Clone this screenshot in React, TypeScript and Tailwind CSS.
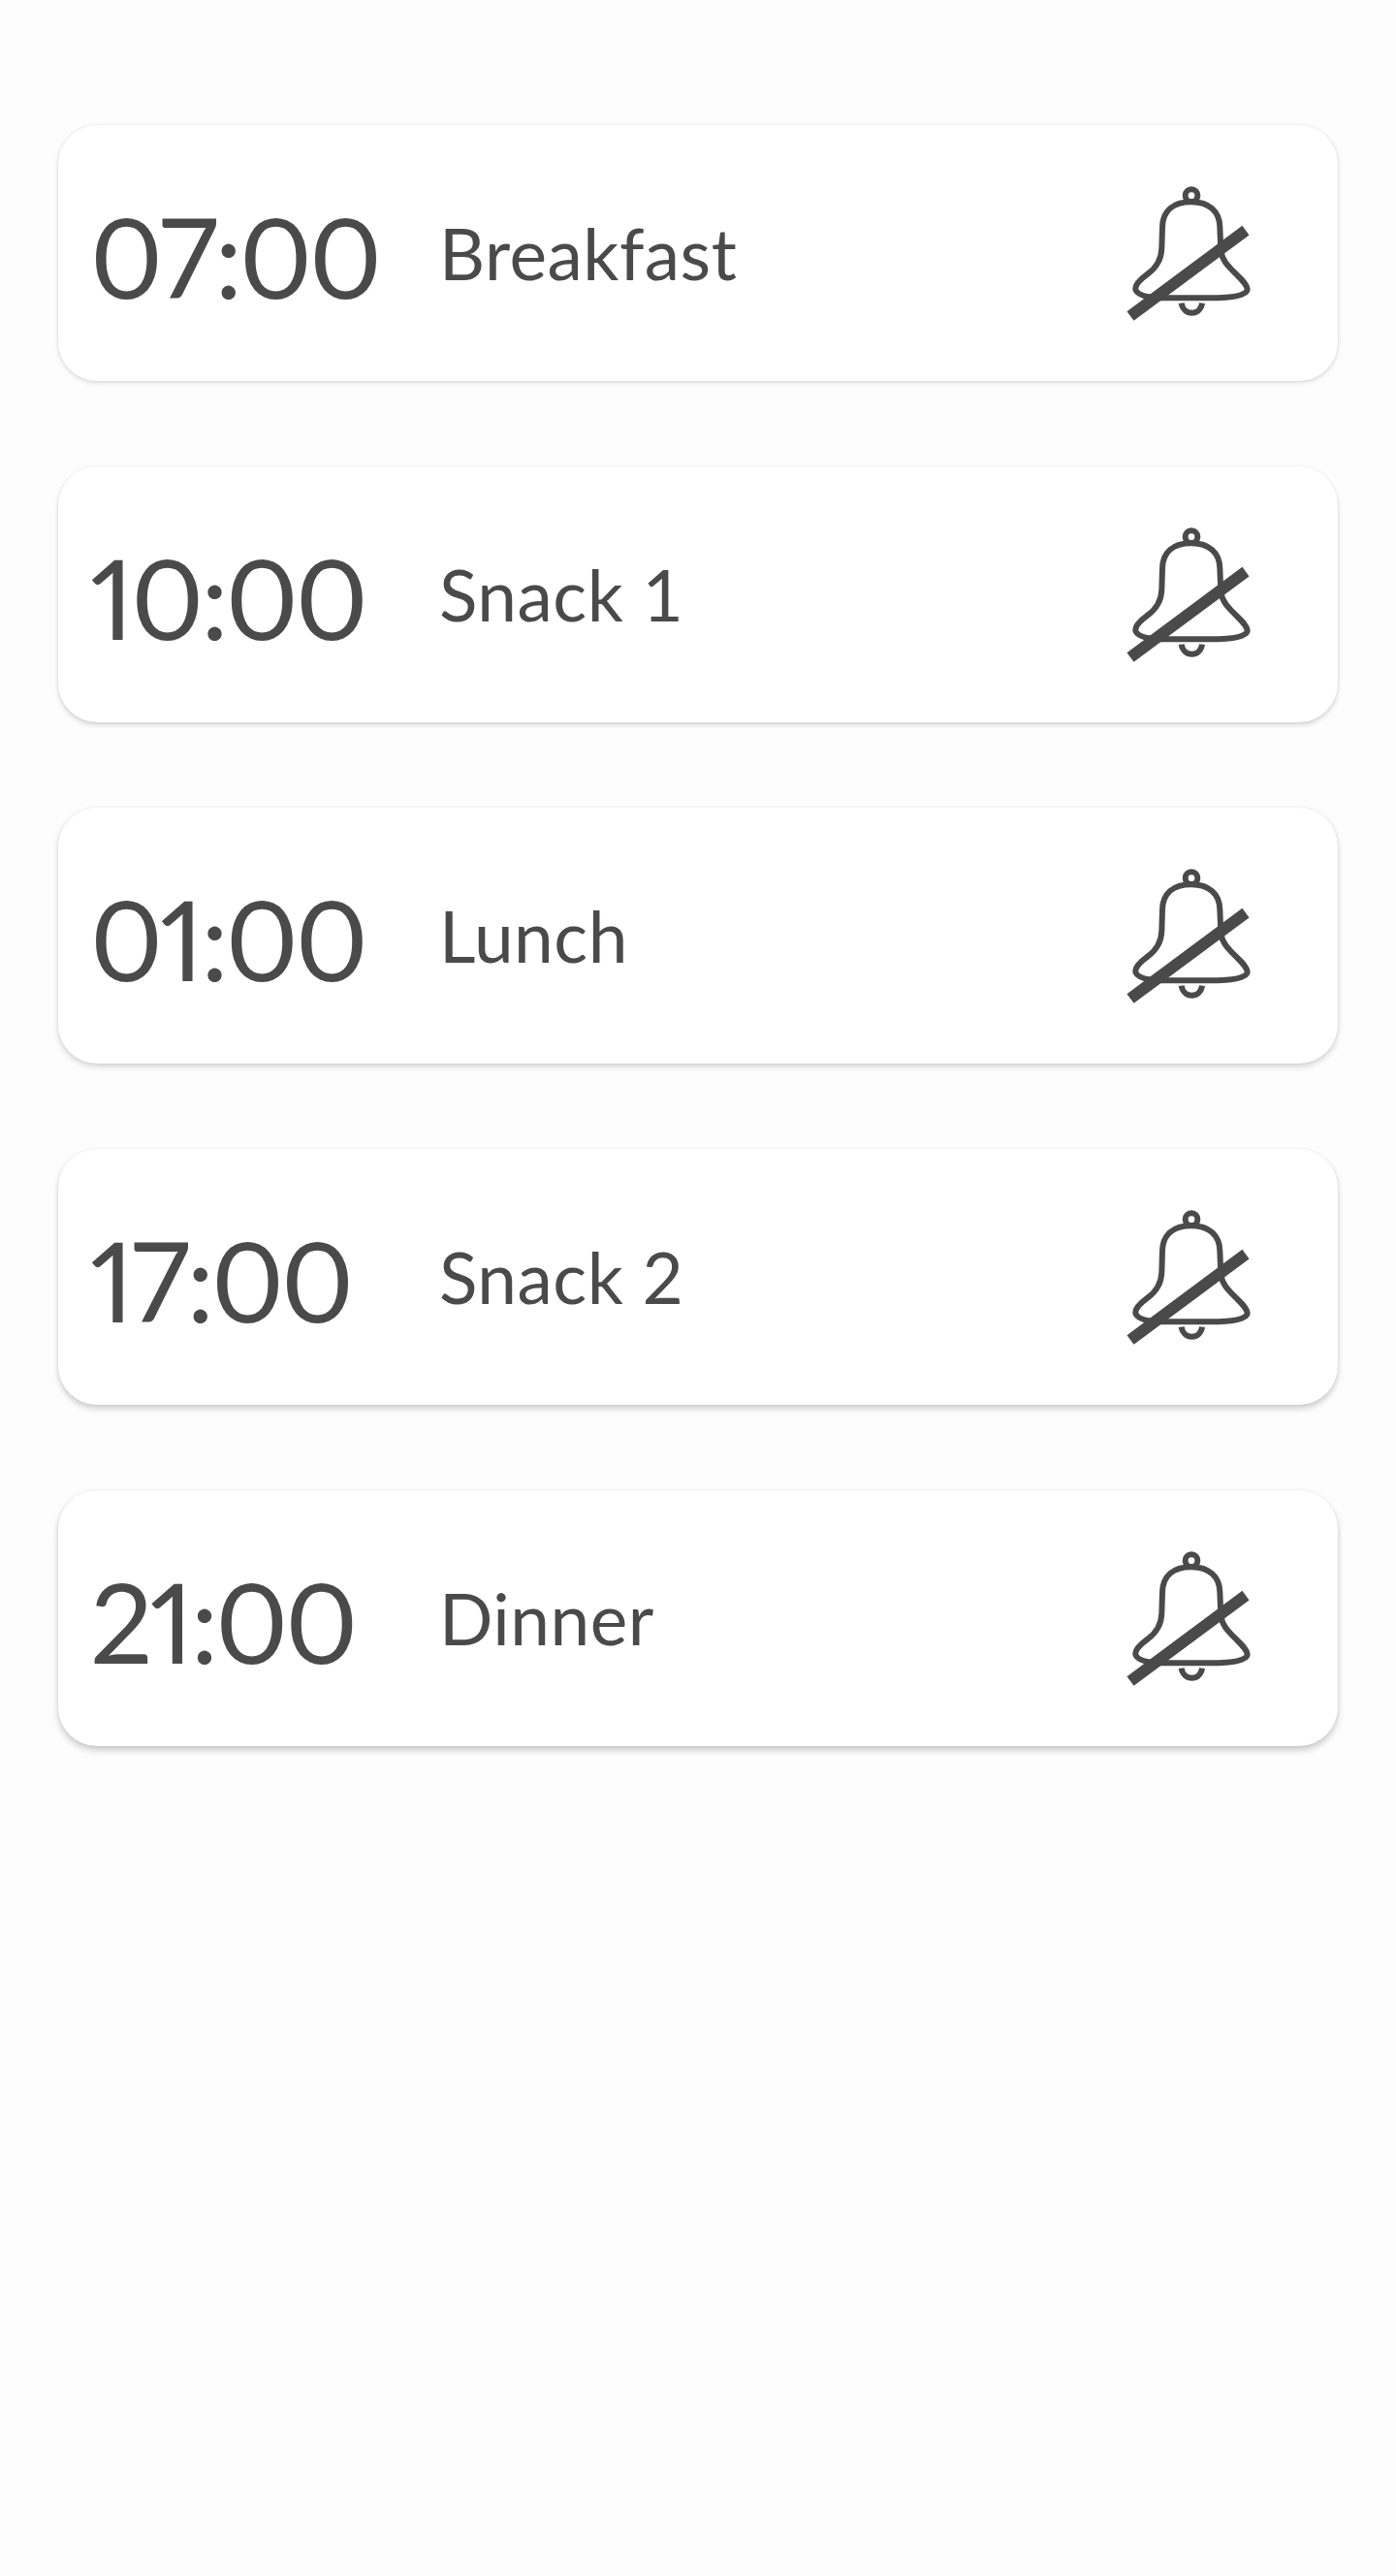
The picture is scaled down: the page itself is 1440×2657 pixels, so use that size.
// shadow grows down the list, like elevation lit from the top of the screen
const meals = [
  { time: "07:00", name: "Breakfast", shadow: "shadow-[0_2px_5px_rgba(0,0,0,0.13),0_0_3px_rgba(0,0,0,0.08)]" },
  { time: "10:00", name: "Snack 1", shadow: "shadow-[0_3px_5px_rgba(0,0,0,0.15),0_0_3px_rgba(0,0,0,0.08)]" },
  { time: "01:00", name: "Lunch", shadow: "shadow-[0_3px_6px_rgba(0,0,0,0.17),0_0_3px_rgba(0,0,0,0.07)]" },
  { time: "17:00", name: "Snack 2", shadow: "shadow-[0_4px_6px_rgba(0,0,0,0.19),0_0_3px_rgba(0,0,0,0.07)]" },
  { time: "21:00", name: "Dinner", shadow: "shadow-[0_4px_7px_rgba(0,0,0,0.21),0_0_3px_rgba(0,0,0,0.06)]" },
];

function BellOff() {
  return (
    <svg width="190" height="170" viewBox="0 0 570 510" fill="none" className="shrink-0 -translate-y-[5px]">
      <g stroke="#4a4a4a" strokeWidth="18" strokeLinejoin="round">
        <circle cx="297" cy="92" r="19" />
        <path d="M297 112C240 112 208 140 207 190L205 255C204 295 185 318 160 336C138 352 122 368 124 382C128 400 160 407 200 409L380 409C430 407 470 400 470 382C468 365 450 350 432 332C408 308 392 292 388 262L385 190C384 140 350 112 297 112Z" />
        <path d="M266 425C272 465 325 465 330 425" />
      </g>
      <path d="M108 465L465 200" stroke="#4a4a4a" strokeWidth="36" />
    </svg>
  );
}

export default function App() {
  return (
    <div className="min-h-[2657px] bg-[#fdfdfd] px-[60px] pt-[129px] font-['Lato',sans-serif] text-[#4a4a4a]">
      <div className="flex flex-col gap-[88px]">
        {meals.map((m) => (
          <div
            key={m.name}
            className={`flex h-[264px] items-center rounded-[40px] bg-white pl-[33px] pr-[60px] ${m.shadow}`}
          >
            <div className="w-[360px] shrink-0 pt-[6px] text-[114px] leading-none font-normal tracking-[-3px] proportional-nums">
              {m.time}
            </div>
            <div className="text-[73px] leading-none font-normal tracking-[0.5px]">{m.name}</div>
            <div className="ml-auto flex">
              <BellOff />
            </div>
          </div>
        ))}
      </div>
    </div>
  );
}
